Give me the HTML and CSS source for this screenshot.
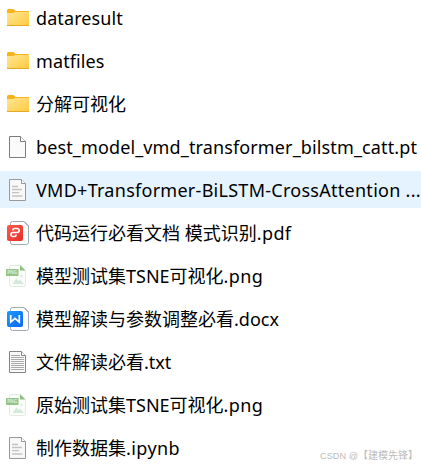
FILE: index.html
```html
<!DOCTYPE html>
<html lang="zh-CN">
<head>
    <meta charset="UTF-8">
    <meta name="viewport" content="width=device-width, initial-scale=1.0">
    <title>dataresult</title>
    <link rel="stylesheet" href="styles.css">
</head>
<body>
    <svg class="defs" width="0" height="0">
        <defs>
            <linearGradient id="gold" x1="0" y1="0" x2="1" y2="1">
                <stop offset="0" stop-color="#ffe694"/>
                <stop offset="1" stop-color="#ffca40"/>
            </linearGradient>
            <linearGradient id="red" x1="0" y1="0" x2="1" y2="1">
                <stop offset="0" stop-color="#ff5a4c"/>
                <stop offset="1" stop-color="#e52e29"/>
            </linearGradient>
            <linearGradient id="blue" x1="0" y1="0" x2="1" y2="1">
                <stop offset="0" stop-color="#1b9aff"/>
                <stop offset="1" stop-color="#0b66f5"/>
            </linearGradient>
            <symbol id="folder" viewBox="0 0 24 24">
                <path d="M1 10V4.5Q1 3 2.5 3H7.5L9.5 5H22Q23 5 23 6V10Z" fill="#f8b31b"/>
                <path d="M1 7H7.5L9 6H23V19.5H1Z" fill="url(#gold)"/>
                <path d="M1 19.5H23" stroke="#e8aa26"/>
            </symbol>
            <symbol id="file" viewBox="0 0 24 24">
                <path d="M3.5 1.5H14.5L19.5 6.5V22.5H3.5Z" fill="#fafafa" stroke="#7d7d7d"/>
                <path d="M14.5 1.5V6.5H19.5" fill="#fff" stroke="#7d7d7d"/>
            </symbol>
            <symbol id="script" viewBox="0 0 24 24">
                <path d="M3.5 1.5H15.5L19.5 5.5V22.5H3.5Z" fill="#f8f8f8" stroke="#999"/>
                <path d="M15.5 1.5V5.5H19.5" fill="#fff" stroke="#999"/>
                <path d="M6 8.5H12M6 11.5H16M6 14.7H13M6 18H16.5" stroke="#c3c3c3" stroke-width="1.3"/>
            </symbol>
            <symbol id="text" viewBox="0 0 24 24">
                <path d="M3.5 1.5H15.5L19.5 5.5V22.5H3.5Z" fill="#fafafa" stroke="#858585"/>
                <path d="M15.5 1.5V5.5H19.5" fill="#fff" stroke="#858585"/>
                <path d="M5 5.5H14M5 7.5H18M5 9.5H18M5 11.5H18M5 13.5H18M5 15.5H18M5 17.5H18M5 19.5H18" stroke="#aaa"/>
            </symbol>
            <symbol id="pdf" viewBox="0 0 24 24">
                <path d="M4.5 4V2.5Q4.5 .5 6.5 .5H18L22.5 5V21.5Q22.5 23.5 20.5 23.5H6.5Q4.5 23.5 4.5 21.5V20" fill="#fff" stroke="#a0a9b8"/>
                <path d="M18 .5L22.5 5" stroke="#8d96a8"/>
                <rect x="1" y="4" width="16" height="16" rx="2" fill="url(#red)"/>
                <path d="M7 9.6V8.8Q7 7.5 8.3 7.5H11Q13.2 7.5 13.2 9.5T11 11.5H7Q4.9 11.5 4.9 13.5T7 15.5H8.5Q10 15.5 10 14.2V13.6" fill="none" stroke="#fff" stroke-width="1.6"/>
            </symbol>
            <symbol id="word" viewBox="0 0 24 24">
                <path d="M4.5 4V2.5Q4.5 .5 6.5 .5H18L22.5 5V21.5Q22.5 23.5 20.5 23.5H6.5Q4.5 23.5 4.5 21.5V20" fill="#fff" stroke="#a0a9b8"/>
                <path d="M18 .5L22.5 5" stroke="#8d96a8"/>
                <rect x="1" y="4" width="16" height="16" rx="2" fill="url(#blue)"/>
                <path d="M4.7 8V15.2L9 11.3L13.3 15.2V8" fill="none" stroke="#fff" stroke-width="1.7"/>
            </symbol>
            <symbol id="png" viewBox="0 0 24 24">
                <path d="M4 1.5H14L19.5 7V20.5Q19.5 22.5 17.5 22.5H5.5Q3.5 22.5 3.5 20.5V2Z" fill="#fbfdfa" stroke="#e1ebde"/>
                <path d="M14 1V6.5H19.5Z" fill="#8fc182"/>
                <path d="M6.5 20L10.5 14.5L12.5 17L14 15.5L18 20Z" fill="#d3e9dc"/>
                <circle cx="15.5" cy="12" r="1.2" fill="#dceee2"/>
                <rect x="0" y="5" width="12.5" height="7" rx=".5" fill="#97c48a"/>
                <text x="1.2" y="10.4" class="tag">PNG</text>
            </symbol>
        </defs>
    </svg>
    <ul class="files">
        <li class="row"><svg class="icon"><use href="#folder"/></svg><span class="name folder">dataresult</span></li>
        <li class="row"><svg class="icon"><use href="#folder"/></svg><span class="name folder">matfiles</span></li>
        <li class="row"><svg class="icon"><use href="#folder"/></svg><span class="name">分解可视化</span></li>
        <li class="row"><svg class="icon"><use href="#file"/></svg><span class="name model">best_model_vmd_transformer_bilstm_catt.pt</span></li>
        <li class="row selected"><svg class="icon"><use href="#script"/></svg><span class="name main">VMD+Transformer-BiLSTM-CrossAttention ...</span></li>
        <li class="row"><svg class="icon"><use href="#pdf"/></svg><span class="name">代码运行必看文档 模式识别<span class="ext">.pdf</span></span></li>
        <li class="row"><svg class="icon"><use href="#png"/></svg><span class="name">模型测试集TSNE可视化<span class="ext">.png</span></span></li>
        <li class="row"><svg class="icon"><use href="#word"/></svg><span class="name">模型解读与参数调整必看.docx</span></li>
        <li class="row"><svg class="icon"><use href="#text"/></svg><span class="name">文件解读必看.txt</span></li>
        <li class="row"><svg class="icon"><use href="#png"/></svg><span class="name">原始测试集TSNE可视化<span class="ext">.png</span></span></li>
        <li class="row"><svg class="icon"><use href="#script"/></svg><span class="name">制作数据集<span class="ext">.ipynb</span></span></li>
    </ul>
    <div class="watermark"><span class="site">CSDN @</span>【建模先锋】</div>
</body>
</html>
```
FILE: styles.css
```css
body {
    margin: 0;
    height: 467px;
    overflow: hidden;
    position: relative;
    background: #fff;
    color: #000;
    font-family: "Noto Sans", "Noto Sans CJK SC", sans-serif;
}
.defs {
    position: absolute;
}
.files {
    list-style: none;
    margin: -1px 0 0;
    padding: 0;
    display: flex;
    flex-direction: column;
    gap: 6px;
}
.row {
    box-sizing: border-box;
    height: 37px;
    display: flex;
    align-items: center;
    padding: 1px 0 0 6px;
    gap: 6px;
}
.row.selected {
    background: #e5f3ff;
}
.icon {
    width: 24px;
    height: 24px;
    flex: none;
}
.name {
    font-size: 18px;
    line-height: 36px;
    white-space: nowrap;
}
.folder {
    letter-spacing: 0.1px;
}
.model {
    letter-spacing: 0.13px;
}
.main {
    letter-spacing: 0.27px;
}
.ext {
    letter-spacing: 0.4px;
}
.tag {
    font-size: 4.6px;
    font-weight: bold;
    fill: #d9ecd3;
}
.watermark {
    position: absolute;
    right: 3px;
    bottom: 3px;
    font-family: "Liberation Sans", "Noto Sans CJK SC", sans-serif;
    font-size: 10px;
    line-height: 16px;
    color: #bbb;
    white-space: nowrap;
}
.site {
    font-size: 9.2px;
}
```
